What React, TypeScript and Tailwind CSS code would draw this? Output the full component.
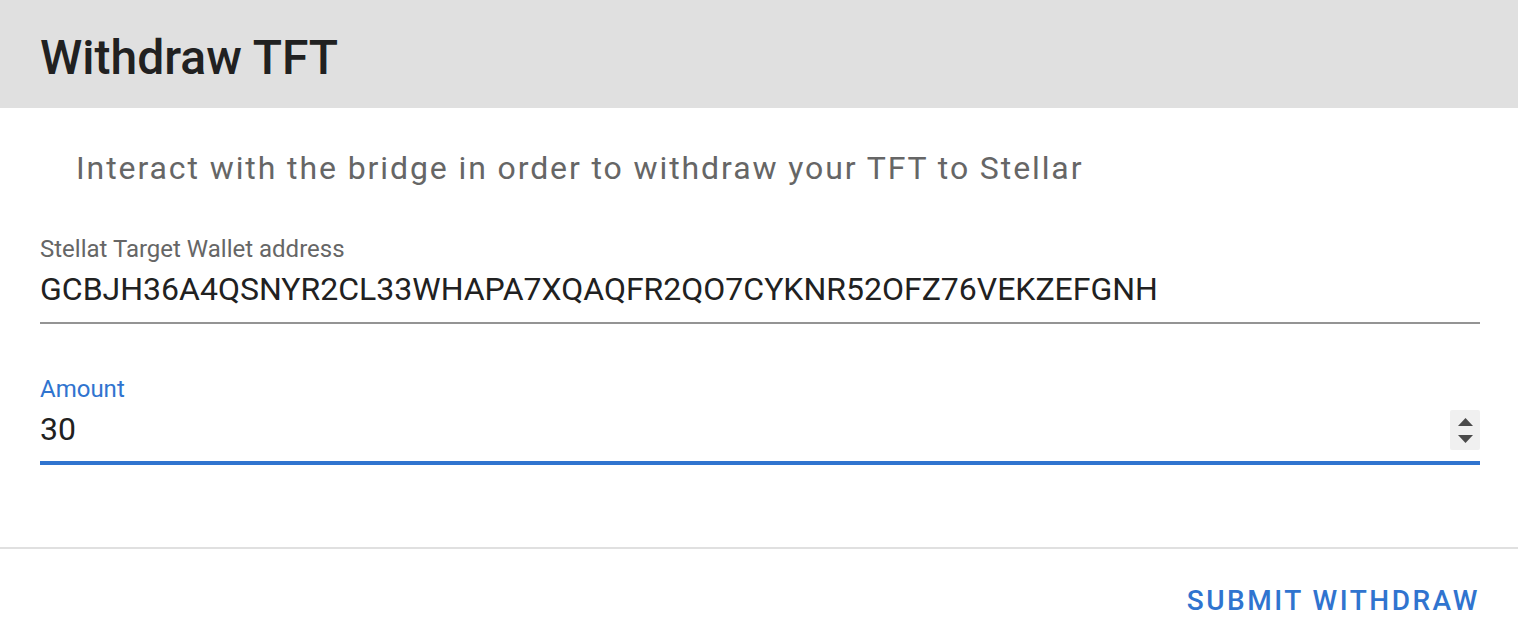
export default function App() {
  return (
    <div className="w-[1518px] h-[640px] bg-white font-['Roboto',_sans-serif] overflow-hidden">
      <div className="h-[108px] bg-[#e0e0e0] pl-10 pt-[34px]">
        <h1 className="text-[48px] leading-[48px] font-medium text-[#212121]">Withdraw TFT</h1>
      </div>

      <div className="pt-10 pl-[76px]">
        <p className="text-[32px] leading-[40px] tracking-[1.9px] text-[#666666]">
          Interact with the bridge in order to withdraw your TFT to Stellar
        </p>
      </div>

      <div className="pl-10 pr-[38px] pt-[45px]">
        <div className="border-b-2 border-[#949494]">
          <div className="text-[24px] leading-[32px] text-[#666666]">Stellat Target Wallet address</div>
          <div className="mt-1 pb-[13px] text-[32px] leading-[40px] text-[#212121]">
            GCBJH36A4QSNYR2CL33WHAPA7XQAQFR2QO7CYKNR52OFZ76VEKZEFGNH
          </div>
        </div>

        <div className="mt-[49px] border-b-4 border-[#3074cf]">
          <div className="text-[24px] leading-[32px] text-[#3074cf]">Amount</div>
          <div className="mt-1 pb-[11px] flex items-start justify-between">
            <span className="text-[32px] leading-[40px] text-[#212121]">30</span>
            <div className="w-[30px] h-[40px] mt-px bg-[#f0f0f0] rounded-[2px] flex flex-col items-center justify-center gap-[9px]">
              <svg width="15" height="8" viewBox="0 0 15 8">
                <path d="M7.5 0 L15 8 L0 8 Z" fill="#4a4a4a" />
              </svg>
              <svg width="15" height="8" viewBox="0 0 15 8">
                <path d="M0 0 L15 0 L7.5 8 Z" fill="#4a4a4a" />
              </svg>
            </div>
          </div>
        </div>
      </div>

      <div className="mt-[82px] h-[2px] bg-[#e0e0e0]" />

      <div className="flex justify-end pr-[38px] pt-[34px]">
        <button className="text-[28px] leading-[36px] font-medium tracking-[2.5px] text-[#3074cf] uppercase">
          Submit Withdraw
        </button>
      </div>
    </div>
  );
}
